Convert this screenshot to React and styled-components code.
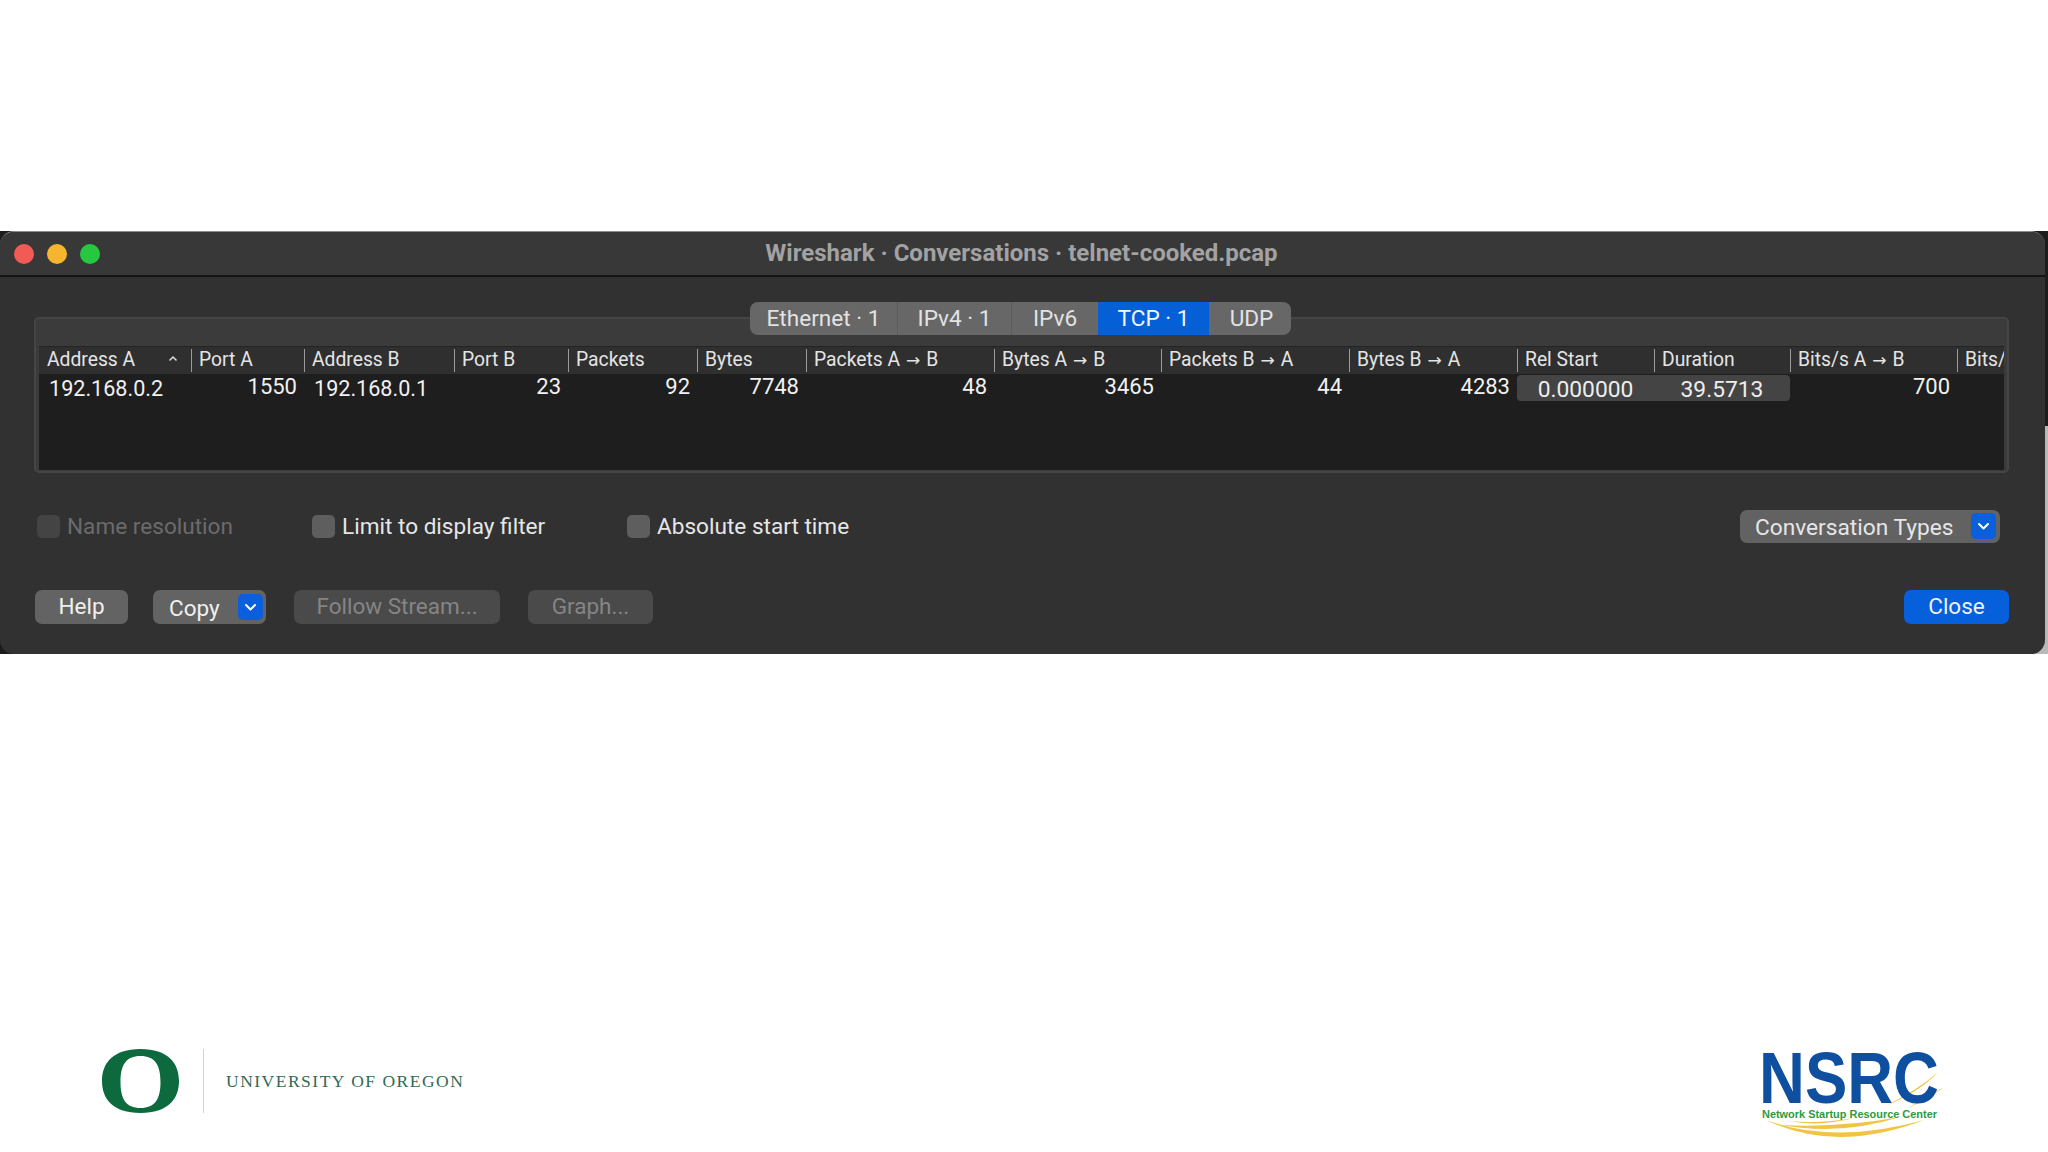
import React from "react";
import styled, { createGlobalStyle } from "styled-components";

const Global = createGlobalStyle`
  html, body { margin: 0; padding: 0; background: #fff; }
  body { font-family: Roboto, "Liberation Sans", sans-serif; width: 2048px; height: 1152px; overflow: hidden; }
`;
const Page = styled.div`
  width: 2048px; height: 1152px; padding-top: 231px; box-sizing: border-box; background: #fff;
`;
const Backdrop = styled.div`
  width: 2048px; height: 423px;
  background:
    linear-gradient(#1c1c1c 46%, #b9b9b9 46%) right / 50% 100% no-repeat,
    #1c1c1c;
`;
const Win = styled.div`
  width: 2045px; height: 423px; box-sizing: border-box; background: #313131;
  border-radius: 14px; border-top: 1px solid #8c8c8c; overflow: hidden;
  display: flex; flex-direction: column;
`;
const TitleBar = styled.div`
  height: 45px; flex: none; box-sizing: border-box; background: #383839;
  border-bottom: 2px solid #141414; padding: 0 14px;
  display: grid; grid-template-columns: 1fr auto 1fr; align-items: center;
`;
const Lights = styled.div`display: flex; gap: 13px;`;
const Light = styled.span`
  width: 20px; height: 20px; border-radius: 50%; background: ${p => p.$c};
`;
const Title = styled.div`
  color: #a2a2a2; font-size: 24px; font-weight: 700; white-space: nowrap; padding: 0 2px 2px 0;
`;
const Panel = styled.div`
  margin: 40px 36px 0 34px; height: 156px; flex: none; box-sizing: border-box;
  background: #3b3b3b; border: 2px solid #454545; border-radius: 5px; padding: 0 3px;
  display: flex; flex-direction: column;
`;
const Tabs = styled.div`
  align-self: center; display: flex; height: 33px; margin: -17px 2px 0 0; flex: none;
  background: #676767; border-radius: 8px; overflow: hidden;
`;
const Tab = styled.div`
  width: ${p => p.$w}px; display: flex; align-items: center; justify-content: center;
  color: ${p => (p.$active ? "#f2f6ff" : "#e2e2e2")}; font-size: 22.6px;
  background: ${p => (p.$active ? "#0560d8" : "transparent")};
  border-right: ${p => (p.$line ? "1px solid #5c5c5c" : "none")}; box-sizing: border-box;
  padding-left: ${p => p.$shift || 0}px;
`;
const Table = styled.div`
  margin-top: 11px; height: 124px; background: #1e1e1e; overflow: hidden;
  border-top: 1px solid #242424; box-sizing: border-box;
`;
const Grid = styled.div`
  display: grid;
  grid-template-columns: 152px 113px 150px 114px 129px 109px 188px 167px 188px 168px 137px 136px 167px 48px;
  overflow: hidden;
`;
const HeadRow = styled(Grid)`height: 27px; background: #2f2f2f; align-items: center;`;
const HeadCell = styled.div`
  color: #e4e4e4; font-size: 19.3px; white-space: nowrap; overflow: hidden;
  height: 23px; line-height: 21px; box-sizing: border-box;
  padding-left: ${p => (p.$first ? "8px" : "7px")};
  border-left: ${p => (p.$first ? "none" : "1px solid #9a9a9a")};
  display: flex; justify-content: space-between;
`;
const HeadArrow = styled.span`font-family: "DejaVu Sans", sans-serif; font-size: 17px; margin: 0 6px;`;
const HeadLabel = styled.span`white-space: pre;`;
const Caret = styled.svg`width: 10px; height: 21px; margin-right: 13px; flex: none;`;
const BodyRow = styled(Grid)`height: 28px; align-items: center;`;
const Cell = styled.div`
  color: #f1f1f1; font-size: 22px; white-space: nowrap; box-sizing: border-box;
  height: 26px; line-height: 24px; text-align: right; padding: 0 7px 0 0;
`;
const AddressCell = styled(Cell)`
  font-size: 21.6px; text-align: left; padding: 2px 0 0 ${p => p.$pad}px;
`;
const Selected = styled.div`
  grid-column: span 2; display: grid; grid-template-columns: 135px 138px; height: 26px;
  background: #444; border-radius: 4px;
`;
const SelCell = styled.div`
  color: #eee; font-size: 22.8px; text-align: center; line-height: 29px; padding-left: 2px;
`;
const Options = styled.div`
  display: flex; align-items: center; height: 32px; margin-top: 37px; padding: 0 45px 0 37px; flex: none;
`;
const CheckItem = styled.label`
  width: ${p => p.$w}px; display: flex; align-items: center; gap: 7px; font-size: 22.6px;
  color: ${p => (p.$off ? "#6b6b6b" : "#e6e6e6")}; white-space: nowrap;
`;
const Box = styled.span`
  width: 23px; height: 23px; border-radius: 5px; flex: none;
  background: ${p => (p.$off ? "#444" : "#5e5e5e")};
`;
const Select = styled.div`
  margin-left: auto; width: 260px; height: 33px; box-sizing: border-box; background: #626262;
  border-radius: 7px; padding: 0 4px 0 15px; display: flex; align-items: center; justify-content: space-between;
  color: #e6e6e6; font-size: 22.7px;
`;
const SelectLabel = styled.span`padding-top: 2px;`;
const Arrow = styled.span`
  width: 25px; height: 26px; background: #0a5fdc; border-radius: 5px;
  display: flex; align-items: center; justify-content: center; flex: none;
`;
const Buttons = styled.div`
  display: flex; align-items: center; gap: 28px; margin-top: 48px; padding: 0 36px 0 35px; flex: none;
`;
const Btn = styled.div`
  width: ${p => p.$w}px; height: 34px; border-radius: 7px; display: flex; align-items: center; justify-content: center;
  box-sizing: border-box; font-size: 22.5px; padding-bottom: 2px;
  background: ${p => (p.$primary ? "#0660dc" : p.$off ? "#4a4a4a" : "#636363")};
  color: ${p => (p.$off ? "#858585" : "#f0f0f0")};
  margin-left: ${p => (p.$end ? "auto" : "0")};
  margin-right: ${p => (p.$tight ? "-3px" : "0")};
`;
const CopyBtn = styled(Btn)`justify-content: space-between; padding: 0 3px 0 16px;`;
const Footer = styled.div`
  margin-top: 376px; height: 122px; padding: 0 88px 0 102px; display: flex; justify-content: space-between; align-items: flex-start;
`;
const Oregon = styled.div`display: flex; align-items: center; margin-top: 19px; height: 64px;`;
const ODivider = styled.div`width: 1px; height: 64px; background: #cfd6d2; margin: 0 22px 0 24px;`;
const OText = styled.div`
  font-family: "Liberation Serif", serif; font-size: 17.5px; letter-spacing: 1.5px; color: #2f6b55; white-space: nowrap;
`;

const Label = ({ a, b }) => <HeadLabel>{a}<HeadArrow>→</HeadArrow>{b}</HeadLabel>;
const Chev = () => (
  <svg width="13" height="9" viewBox="0 0 13 9"><path d="M2 2l4.500 4.500L11 2" fill="none" stroke="#fff" strokeWidth="2" strokeLinecap="round" strokeLinejoin="round" /></svg>
);

export default function App() {
  return (
    <Page>
      <Global />
      <Backdrop>
        <Win>
          <TitleBar>
            <Lights>
              <Light $c="#f25a55" /><Light $c="#f6b42f" /><Light $c="#26c840" />
            </Lights>
            <Title>Wireshark · Conversations · telnet-cooked.pcap</Title>
            <span />
          </TitleBar>
          <Panel>
            <Tabs>
              <Tab $w={148} $line>Ethernet · 1</Tab>
              <Tab $w={114} $line>IPv4 · 1</Tab>
              <Tab $w={86}>IPv6</Tab>
              <Tab $w={111} $active>TCP · 1</Tab>
              <Tab $w={82} $shift={3}>UDP</Tab>
            </Tabs>
            <Table>
              <HeadRow>
                <HeadCell $first>
                  Address A
                  <Caret viewBox="0 0 10 21"><path d="M1.500 11.500L5 8l3.500 3.500" fill="none" stroke="#ddd" strokeWidth="1.500" /></Caret>
                </HeadCell>
                <HeadCell>Port A</HeadCell>
                <HeadCell>Address B</HeadCell>
                <HeadCell>Port B</HeadCell>
                <HeadCell>Packets</HeadCell>
                <HeadCell>Bytes</HeadCell>
                <HeadCell><Label a="Packets A" b="B" /></HeadCell>
                <HeadCell><Label a="Bytes A" b="B" /></HeadCell>
                <HeadCell><Label a="Packets B" b="A" /></HeadCell>
                <HeadCell><Label a="Bytes B" b="A" /></HeadCell>
                <HeadCell>Rel Start</HeadCell>
                <HeadCell>Duration</HeadCell>
                <HeadCell><Label a="Bits/s A" b="B" /></HeadCell>
                <HeadCell>Bits/s B → A</HeadCell>
              </HeadRow>
              <BodyRow>
                <AddressCell $pad={10}>192.168.0.2</AddressCell>
                <Cell>1550</Cell>
                <AddressCell $pad={10}>192.168.0.1</AddressCell>
                <Cell>23</Cell>
                <Cell>92</Cell>
                <Cell>7748</Cell>
                <Cell>48</Cell>
                <Cell>3465</Cell>
                <Cell>44</Cell>
                <Cell>4283</Cell>
                <Selected>
                  <SelCell>0.000000</SelCell>
                  <SelCell>39.5713</SelCell>
                </Selected>
                <Cell>700</Cell>
                <Cell />
              </BodyRow>
            </Table>
          </Panel>
          <Options>
            <CheckItem $w={275} $off><Box $off />Name resolution</CheckItem>
            <CheckItem $w={315}><Box />Limit to display filter</CheckItem>
            <CheckItem $w={300}><Box />Absolute start time</CheckItem>
            <Select><SelectLabel>Conversation Types</SelectLabel><Arrow><Chev /></Arrow></Select>
          </Options>
          <Buttons>
            <Btn $w={93} $tight>Help</Btn>
            <CopyBtn $w={113}><SelectLabel>Copy</SelectLabel><Arrow><Chev /></Arrow></CopyBtn>
            <Btn $w={206} $off>Follow Stream...</Btn>
            <Btn $w={125} $off>Graph...</Btn>
            <Btn $w={105} $primary $end>Close</Btn>
          </Buttons>
        </Win>
      </Backdrop>
      <Footer>
        <Oregon>
          <svg width="77" height="64" viewBox="0 0 77 64">
            <path fillRule="evenodd" fill="#0c6a3e" d="M38.500 0C66 0 77 14 77 32C77 50 66 64 38.500 64C11 64 0 50 0 32C0 14 11 0 38.500 0ZM38.500 7C24 7 18.500 16 18.500 33C18.500 50 24 59 38.500 59C53 59 58.500 50 58.500 33C58.500 16 53 7 38.500 7Z" />
          </svg>
          <ODivider />
          <OText>UNIVERSITY OF OREGON</OText>
        </Oregon>
        <svg width="230" height="122" viewBox="0 0 230 122">
          <g fill="#f1c443">
            <path d="M36 90Q105 124 194 90Q105 115 36 90Z" />
            <path d="M52 95Q110 106 170 87Q110 98 52 95Z" />
            <path d="M58 91Q90 97 124 88Q90 94 58 91Z" />
            <path d="M155 76Q190 62 208 42Q188 60 155 76Z" />
            <path d="M178 78Q200 68 214 57Q198 66 178 78Z" />
          </g>
          <text x="29" y="73" textLength="180" lengthAdjust="spacingAndGlyphs" fontFamily="Liberation Sans" fontWeight="700" fontSize="72" fill="#0f4f9f">NSRC</text>
          <text x="32" y="88" textLength="175" lengthAdjust="spacingAndGlyphs" fontFamily="Liberation Sans" fontWeight="700" fontSize="11.500" fill="#2f9a3c">Network Startup Resource Center</text>
        </svg>
      </Footer>
    </Page>
  );
}
